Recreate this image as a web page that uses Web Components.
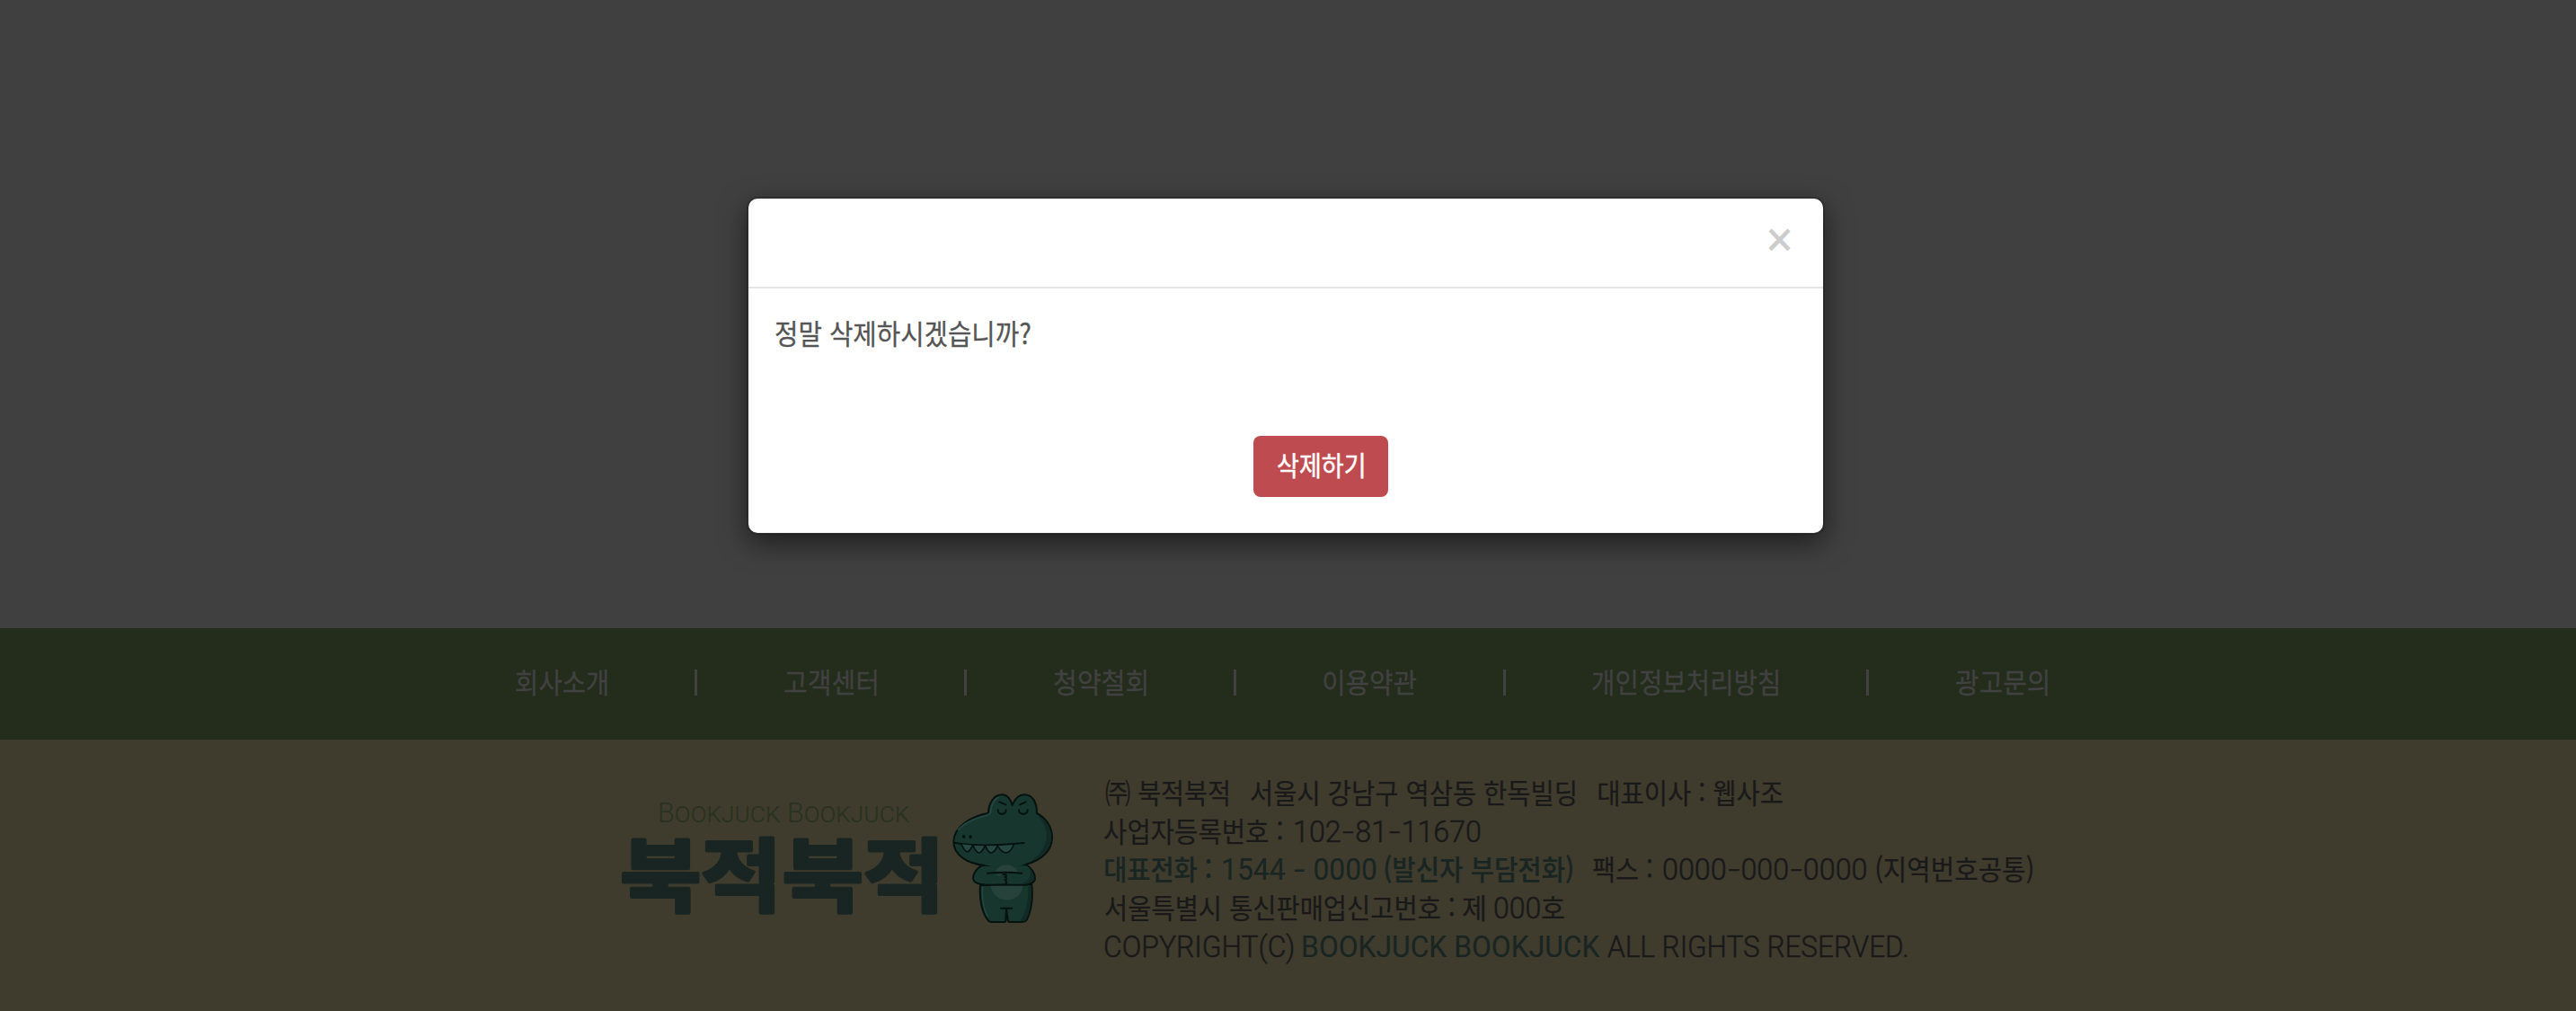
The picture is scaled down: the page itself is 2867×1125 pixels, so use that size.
<!DOCTYPE html>
<html lang="ko">
<head>
<meta charset="utf-8">
<title>북적북적</title>
<style>
body{margin:0;background:#404040;font-family:"Noto Sans CJK KR",sans-serif;overflow:hidden}
</style>
</head>
<body>
<shop-page></shop-page>
<script>
const ctx = document.createElement('canvas').getContext('2d');

/* Text run condensed or widened so that its ink fills exactly w pixels. */
class FitText extends HTMLElement {
  connectedCallback() {
    const text = this.textContent;
    const root = this.attachShadow({mode: 'open'});
    root.innerHTML = `<style>
      :host{display:inline-block;white-space:pre;flex:none;width:${this.getAttribute('w')}px}
      span{display:inline-block;transform-origin:0 50%}
      i{display:inline-block;font-style:normal;transform:scaleX(1.4);margin:0 .1em}
    </style><span></span>`;
    const span = root.querySelector('span');
    span.innerHTML = text.replace(/-/g, '<i>-</i>');
    const cs = getComputedStyle(this);
    ctx.font = `${cs.fontWeight} ${cs.fontSize} ${cs.fontFamily}`;
    const a = ctx.measureText(text[0]), b = ctx.measureText(text[text.length - 1]);
    const left = -a.actualBoundingBoxLeft, right = b.width - b.actualBoundingBoxRight;
    const ink = span.offsetWidth - left - right;
    const k = Number(this.getAttribute('w')) / ink;
    span.style.transform = `translateX(${-left * k}px) scaleX(${k})`;
  }
}
customElements.define('fit-text', FitText);

class FooterNav extends HTMLElement {
  constructor() {
    super();
    const items = [['회사소개',102],['고객센터',102.5],['청약철회',103],['이용약관',103.5],['개인정보처리방침',207],['광고문의',102]];
    this.attachShadow({mode: 'open'}).innerHTML = `<style>
      :host{display:block;background:#242c1c;height:124px;color:#414141}
      nav{display:flex;gap:95.8px;align-items:center;padding:46px 0 0 572.6px;font-size:31px;line-height:29px}
      fit-text{-webkit-text-stroke:.35px #414141;position:relative;top:-2px}
      b{flex:none;width:3px;height:29px;background:#414141}
      a{flex:none;display:block;width:105.1px;box-sizing:border-box;padding-left:1px}
      a.long{width:210.2px}
    </style><nav>${items.map(([t, w]) => `<a class="${t.length > 4 ? 'long' : ''}"><fit-text w="${w}">${t}</fit-text></a>`).join('<b></b>')}</nav>`;
  }
}
customElements.define('footer-nav', FooterNav);

class CrocoMascot extends HTMLElement {
  constructor() {
    super();
    this.attachShadow({mode: 'open'}).innerHTML = `<style>:host{display:block;flex:none}svg{display:block}</style>
    <svg width="140" height="170" viewBox="0 0 420 510" fill="none" stroke="#06120f" stroke-width="6" stroke-linecap="round" stroke-linejoin="round">
      <path fill="#16362e" d="M123 345C119 390 128 437 150 464Q154 468 162 468H203Q208 468 208 461L210 423L215 461Q216 468 222 468H264Q273 468 278 461C293 432 299 390 295 342Z"/>
      <path fill="#112a25" stroke="none" d="M283 348H293C296 390 290 430 275 461Q272 465 264 465H256C278 430 284 395 283 348Z"/>
      <path stroke="#254740" stroke-width="4" d="M131 352C128 390 135 425 148 450"/>
      <path fill="#16362e" d="M130 279C106 290 96 316 100 326C104 341 127 347 206 343C280 348 303 341 306 324C307 307 294 286 276 276Z"/>
      <path fill="#112a25" stroke="none" d="M290 291C300 304 304 315 302 325C298 338 276 341 252 342C283 332 294 322 290 291Z"/>
      <path fill="#16362e" d="M140 279C85 275 33 247 34 198C36 148 93 115 150 104C150 70 170 43 195 43C216 43 227 63 230 78C237 60 248 43 270 43C297 43 312 67 312 105C340 119 363 149 363 187C361 234 324 262 272 277"/>
      <path fill="#16362e" stroke="none" d="M136 276C190 290 230 290 276 273L245 245H150Z"/>
      <g fill="#27423a" stroke="none"><path d="M174 300C182 270 238 270 248 300Z"/><path d="M158 347H265C257 412 166 408 158 347Z"/></g>
      <path fill="#112a25" stroke="none" d="M315 111C342 126 360 153 360 187C358 224 334 249 295 264C360 214 355 157 315 111Z"/>
      <path stroke="#254740" stroke-width="5" d="M50 160C68 138 104 122 145 112L157 105C158 79 169 57 185 52"/>
      <path d="M37 203C100 215 180 213 269 204"/>
      <path fill="#254740" stroke-width="5" d="M60 208C66 222 74 235 82 233C88 230 93 222 98 212M99 213C106 228 112 238 119 237C127 235 134 224 138 214M140 214C147 230 155 238 161 237C170 234 176 224 180 214M181 214C190 228 200 238 210 237C221 235 230 222 234 211"/>
      <path d="M187 67L208 76M255 76L275 67M182 94C182 112 209 112 209 94M252 94C252 112 281 112 281 94"/>
      <ellipse cx="68" cy="183" rx="5" ry="6" fill="#06120f" stroke="none"/><ellipse cx="90" cy="184" rx="5" ry="6" fill="#06120f" stroke="none"/>
      <path d="M147 305Q205 299 262 305M192 422H229M200 309C211 307 213 315 205 318C212 319 212 327 205 328C212 329 212 338 206 343"/>
      <path stroke="#27423a" stroke-width="5" d="M182 311H191"/>
    </svg>`;
  }
}
customElements.define('croco-mascot', CrocoMascot);

class BrandLogo extends HTMLElement {
  constructor() {
    super();
    this.attachShadow({mode: 'open'}).innerHTML = `<style>
      :host{display:flex;flex:none;width:538px}
      .words{width:358px;flex:none;padding-top:65px}
      .en{margin-left:42px;font:300 32px/32px "Roboto","Noto Sans CJK KR",sans-serif;font-variant:small-caps;color:#28321f;height:32px}
      svg{display:block;overflow:visible}
      croco-mascot{margin-top:47px}
    </style>
    <div class="words"><div class="en"><fit-text w="279">Bookjuck Bookjuck</fit-text></div>
    <svg width="358" height="104"><text transform="scale(1.1 1)" x="-1.5 80 162.5 244.5" y="87" font-family="Noto Sans CJK KR, sans-serif" font-weight="700" font-size="89" fill="#182523" stroke="#182523" stroke-width="4" stroke-linejoin="round">북적북적</text></svg></div>
    <croco-mascot></croco-mascot>`;
  }
}
customElements.define('brand-logo', BrandLogo);

class CompanyInfo extends HTMLElement {
  constructor() {
    super();
    const lines = [
      [[0,137,'㈜ 북적북적'],[25,361,'서울시 강남구 역삼동 한독빌딩'],[26,205,'대표이사 : 웹사조']],
      [[-1,198,'사업자등록번호 :'],[14,206,'102-81-11670','n']],
      [[0,118,'대표전화 :','t'],[13,170,'1544 - 0000','t n'],[10,209,'(발신자 부담전화)','t'],[23,65,'팩스 :'],[13,226,'0000-000-0000','n'],[11,174,'(지역번호공통)']],
      [[0,388,'서울특별시 통신판매업신고번호 :'],[10,25,'제'],[10,51,'000','n'],[2,25,'호']],
      [[0,209,'COPYRIGHT(C)','n'],[11,331,'BOOKJUCK BOOKJUCK','t n'],[8,334,'ALL RIGHTS RESERVED.','n']]
    ];
    this.attachShadow({mode: 'open'}).innerHTML = `<style>
      :host{display:block;padding-top:37px;font-size:31px;line-height:42.7px;color:#191919}
      p{margin:0;height:42.7px;display:flex;align-items:baseline}
      p::before{content:"\\200b";width:0}
      fit-text{-webkit-text-stroke:.2px currentColor}
      .t{color:#182523;font-weight:500}
      .n{font-family:"Roboto","Noto Sans CJK KR",sans-serif;font-size:33.5px;font-weight:300;-webkit-text-stroke:.5px currentColor}
      .t.n{font-weight:400;-webkit-text-stroke:.1px currentColor}
    </style>${lines.map(l => `<p>${l.map(([m, w, t, c]) => `<fit-text class="${c || ''}" style="margin-left:${m}px" w="${w}">${t}</fit-text>`).join('')}</p>`).join('')}`;
  }
}
customElements.define('company-info', CompanyInfo);

class ConfirmDialog extends HTMLElement {
  constructor() {
    super();
    this.attachShadow({mode: 'open'}).innerHTML = `<style>
      :host{position:absolute;left:831px;top:219px;width:1196px;height:372px;border:2px solid rgba(0,0,0,.2);border-radius:12px;background:#fff;background-clip:padding-box;box-shadow:0 10px 30px rgba(0,0,0,.5)}
      header{height:98px;border-bottom:2px solid #e5e5e5;display:flex;justify-content:flex-end;box-sizing:content-box}
      .x{margin:17px 37px 0 0;height:54px;line-height:54px;font-size:36px;font-weight:700;color:#ccc;-webkit-text-stroke:.8px #ccc}
      .body{height:128px;padding:0 30px;display:flex;font-size:31px;line-height:44px;color:#555}
      footer{display:flex;padding:36px 0 0 562px}
      button{all:unset;box-sizing:border-box;width:150px;height:68px;border-radius:8px;background:#be4b50;color:#fff;font-size:29.5px;display:flex;align-items:flex-start;line-height:44px;padding:9px 0 0 26.5px;-webkit-text-stroke:.5px #fff}
    </style>
    <header><fit-text class="x" w="23">×</fit-text></header>
    <div class="body"><slot></slot></div>
    <footer><button><fit-text w="96">삭제하기</fit-text></button></footer>`;
  }
}
customElements.define('confirm-dialog', ConfirmDialog);

class ShopPage extends HTMLElement {
  constructor() {
    super();
    this.attachShadow({mode: 'open'}).innerHTML = `<style>
      :host{display:flex;flex-direction:column;height:1125px;overflow:hidden}
      main{height:699px;flex:none}
      footer-nav{flex:none}
      .company{flex:1;display:flex;background:#3f3b2d;padding-left:691.5px}
      .message{margin-top:27px;-webkit-text-stroke:.3px #555}
    </style>
    <main></main><footer-nav></footer-nav>
    <div class="company"><brand-logo></brand-logo><company-info></company-info></div>
    <confirm-dialog><fit-text class="message" w="284.5">정말 삭제하시겠습니까?</fit-text></confirm-dialog>`;
  }
}
customElements.define('shop-page', ShopPage);
</script>
</body>
</html>
